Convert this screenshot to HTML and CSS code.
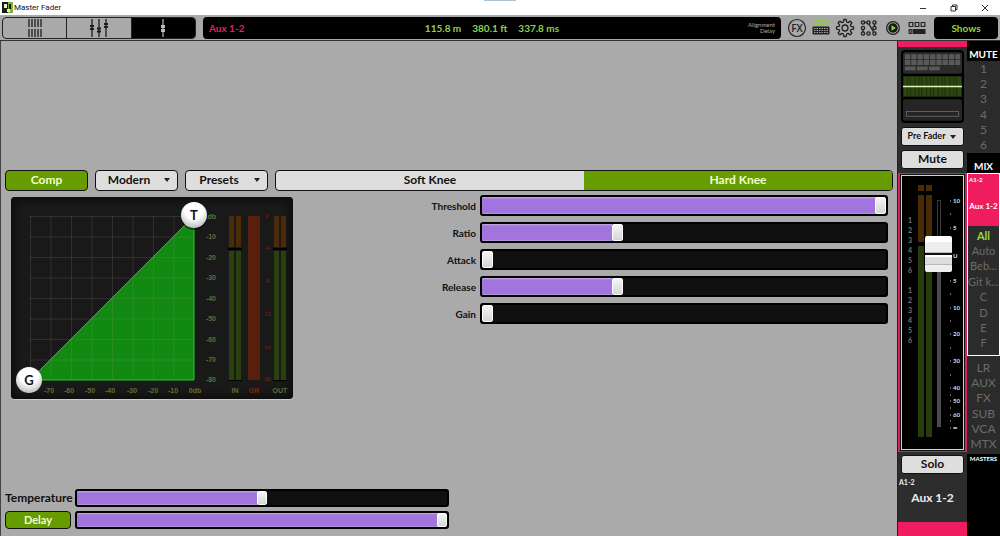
FILE: index.html
```html
<!DOCTYPE html>
<html lang="en">
<head>
    <meta charset="UTF-8">
    <meta name="viewport" content="width=device-width, initial-scale=1.0">
    <title>Master Fader</title>
    <link rel="stylesheet" href="styles.css">
</head>
<body>
    <header class="titlebar">
        <svg class="app-icon" width="11" height="11" viewBox="0 0 11 11">
            <rect width="11" height="11" fill="#7fb239"/>
            <path d="M0 0h6v11H0z" fill="#12210c"/>
            <path d="M2 2h3v4H2zM5 7h3v3H5z" fill="#e8f0dc"/>
            <path d="M7 2h2v5H7z" fill="#12210c"/>
        </svg>
        <span class="app-name">Master Fader</span>
        <div class="window-buttons">
            <button aria-label="Minimize"><svg width="8" height="8" viewBox="0 0 8 8"><path d="M1 4.500h6"/></svg></button>
            <button aria-label="Restore"><svg width="8" height="8" viewBox="0 0 8 8"><path d="M1 2.500h4.500V7H1zM2.500 2.500V1H7v4.500H5.500"/></svg></button>
            <button aria-label="Close"><svg width="8" height="8" viewBox="0 0 8 8"><path d="M1 1l6 6M7 1L1 7"/></svg></button>
        </div>
    </header>

    <nav class="toolbar">
        <div class="views">
            <button aria-label="Overview">
                <svg width="16" height="18" viewBox="0 0 16 18">
                    <path d="M2 0v8M5 0v8M8 0v8M11 0v8M14 0v8M2 10v8M5 10v8M8 10v8M11 10v8M14 10v8" stroke="#1c1c1c" stroke-width="1.300"/>
                </svg>
            </button>
            <button aria-label="Mixer">
                <svg width="22" height="18" viewBox="0 0 22 18">
                    <path d="M4 0v18M11 0v18M18 0v18" stroke="#1c1c1c" stroke-width="1.300"/>
                    <path d="M2 6h4v2H2zM2 9h4v2H2zM9 8.500h4v2H9zM9 11.500h4v2H9zM16 4h4v2h-4zM16 7h4v2h-4z" fill="#1c1c1c"/>
                </svg>
            </button>
            <button class="active" aria-label="Channel">
                <svg width="10" height="18" viewBox="0 0 10 18">
                    <path d="M5 0v18" stroke="#bbb" stroke-width="1.200"/>
                    <path d="M3 6h4v3H3zM3 10h4v3H3z" fill="#bbb"/>
                </svg>
            </button>
        </div>
        <div class="display">
            <span class="display-channel">Aux 1-2</span>
            <div class="readouts">
                <span>115.8 m</span>
                <span>380.1 ft</span>
                <span>337.8 ms</span>
            </div>
            <span class="display-label">Alignment<br>Delay</span>
        </div>
        <div class="tools">
            <button aria-label="Effects">
                <svg width="20" height="20" viewBox="0 0 20 20">
                    <circle cx="10" cy="10" r="8.500" fill="none" stroke="#222" stroke-width="1.200"/>
                    <text x="10" y="14" text-anchor="middle" class="fx-text">FX</text>
                </svg>
            </button>
            <button aria-label="Mixer connection">
                <svg width="20" height="20" viewBox="0 0 20 20">
                    <path d="M2.500 5.500Q10 -2 17.500 5.500" fill="none" stroke="#86d42a" stroke-width="1.600"/>
                    <path d="M5.500 7.500Q10 3 14.500 7.500" fill="none" stroke="#86d42a" stroke-width="1.600"/>
                    <rect x="1.500" y="8.500" width="17" height="8" rx="1" fill="#222"/>
                    <path d="M3 10.500h14M3 12.500h14M3 14.500h14" stroke="#a5a5a5" stroke-width="1" stroke-dasharray="1.500 1"/>
                </svg>
            </button>
            <button aria-label="Settings">
                <svg width="20" height="20" viewBox="0 0 20 20" fill="none" stroke="#222" stroke-width="1.300" stroke-linejoin="round">
                    <path d="M8.400 4L8.800 1.500h2.400L11.600 4L13.100 4.600L15.200 3.100L16.900 4.800L15.400 6.900L16 8.400L18.500 8.800v2.400L16 11.600L15.400 13.100L16.900 15.200L15.200 16.900L13.100 15.400L11.600 16L11.200 18.500H8.800L8.400 16L6.900 15.400L4.800 16.900L3.100 15.200L4.600 13.100L4 11.600L1.500 11.200V8.800L4 8.400L4.600 6.900L3.100 4.800L4.800 3.100L6.900 4.600z"/>
                    <circle cx="10" cy="10" r="3"/>
                </svg>
            </button>
            <button aria-label="Patching">
                <svg width="20" height="20" viewBox="0 0 20 20" fill="none" stroke="#222" stroke-width="1.400">
                    <path d="M4 4.500h5l6.500 11M4 10v5.500M15.500 4.500V10"/>
                    <g fill="#aaa">
                        <circle cx="4" cy="4.500" r="1.600"/><circle cx="9.500" cy="4.500" r="1.600"/><circle cx="15.500" cy="4.500" r="1.600"/>
                        <circle cx="4" cy="10" r="1.600"/><circle cx="15.500" cy="10" r="1.600"/>
                        <circle cx="4" cy="15.500" r="1.600"/><circle cx="9.500" cy="15.500" r="1.600"/><circle cx="15.500" cy="15.500" r="1.600"/>
                    </g>
                </svg>
            </button>
            <button aria-label="Playback">
                <svg width="20" height="20" viewBox="0 0 20 20">
                    <circle cx="10" cy="10" r="6.300" fill="#aaa" stroke="#222" stroke-width="1.300"/>
                    <circle cx="10" cy="10" r="4.700" fill="#161616"/>
                    <path d="M8.500 7.200l4.300 2.800l-4.300 2.800z" fill="#8be01e"/>
                </svg>
            </button>
            <button aria-label="View groups">
                <svg width="20" height="20" viewBox="0 0 20 20">
                    <path d="M2.200 4.500h3.600v4H2.200zM8.200 4.500h3.600v4H8.200zM14.200 4.500h3.600v4h-3.600zM2.200 11.500h2v4h-2z" fill="none" stroke="#222" stroke-width="1.200"/>
                    <path d="M5.500 11h13v5h-13z" fill="#222"/>
                </svg>
            </button>
        </div>
        <button class="shows">Shows</button>
    </nav>

    <main class="mixer">
        <section class="editor">
            <div class="options">
                <button class="btn on">Comp</button>
                <div class="picker"><select aria-label="Compressor model"><option>Modern</option></select></div>
                <div class="picker"><select aria-label="Presets"><option>Presets</option></select></div>
                <div class="knee">
                    <button>Soft Knee</button>
                    <button class="on">Hard Knee</button>
                </div>
            </div>

            <div class="dynamics">
                <svg class="graph" width="282" height="202" viewBox="0 0 282 202">
                    <defs>
                        <radialGradient id="knob" cx="0.500" cy="0.300" r="0.700">
                            <stop offset="0.500" stop-color="#fff"/>
                            <stop offset="1" stop-color="#bdbdbd"/>
                        </radialGradient>
                    </defs>
                    <path class="curve" d="M19 183L183 19V183z"/>
                    <path class="grid" d="M19.500 19v164M40 19v164M60.500 19v164M81 19v164M101.500 19v164M122 19v164M142.500 19v164M163 19v164M19 19.500h164M19 40h164M19 60.500h164M19 81h164M19 101.500h164M19 122h164M19 142.500h164M19 163h164"/>
                    <g class="scale scale-y">
                        <text x="205" y="22">db</text><text x="205" y="42">-10</text><text x="205" y="63">-20</text>
                        <text x="205" y="83">-30</text><text x="205" y="104">-40</text><text x="205" y="124">-50</text>
                        <text x="205" y="145">-60</text><text x="205" y="165">-70</text><text x="205" y="185">-80</text>
                    </g>
                    <g class="scale scale-x">
                        <text x="38" y="196">-70</text><text x="58" y="196">-60</text><text x="79" y="196">-50</text>
                        <text x="99" y="196">-40</text><text x="121" y="196">-30</text><text x="142" y="196">-20</text>
                        <text x="162" y="196">-10</text><text x="184" y="196">0db</text>
                        <text x="224" y="196">IN</text><text x="243" y="196" class="gr">GR</text><text x="269" y="196">OUT</text>
                    </g>
                    <path class="meter-high" d="M218 19h5v31h-5zM225 19h5v31h-5zM263 19h5v31h-5zM270 19h5v31h-5z"/>
                    <path class="meter-low" d="M218 54h5v129h-5zM225 54h5v129h-5zM263 54h5v129h-5zM270 54h5v129h-5z"/>
                    <path class="meter-gap" d="M217 51h14v2h-14zM262 51h14v2h-14zM217 183h14v1h-14zM262 183h14v1h-14z"/>
                    <rect class="meter-gr" x="237" y="19" width="12" height="164"/>
                    <g class="scale-gr">
                        <text x="256" y="21">0</text><text x="256" y="53">-4</text><text x="256" y="86">-8</text>
                        <text x="256" y="119">-12</text><text x="256" y="152">-16</text><text x="256" y="184">-20</text>
                    </g>
                    <circle cx="183" cy="20" r="13" fill="#000" opacity="0.500"/>
                    <circle cx="183" cy="18" r="13" fill="url(#knob)"/>
                    <circle cx="18" cy="183" r="13" fill="url(#knob)"/>
                    <text class="knob-text" x="183" y="23">T</text>
                    <text class="knob-text" x="18" y="188">G</text>
                </svg>

                <div class="sliders">
                    <label for="threshold">Threshold</label>
                    <input type="range" id="threshold" value="100" style="--value: 1">
                    <label for="ratio">Ratio</label>
                    <input type="range" id="ratio" value="33" style="--value: 0.33">
                    <label for="attack">Attack</label>
                    <input type="range" id="attack" value="0" style="--value: 0">
                    <label for="release">Release</label>
                    <input type="range" id="release" value="33" style="--value: 0.33">
                    <label for="gain">Gain</label>
                    <input type="range" id="gain" value="0" style="--value: 0">
                </div>
            </div>

            <div class="delay-panel">
                <label for="temperature">Temperature</label>
                <input type="range" id="temperature" value="50" style="--value: 0.5">
                <button class="btn on">Delay</button>
                <input type="range" aria-label="Delay" value="100" style="--value: 1">
            </div>
        </section>

        <aside class="strip">
            <div class="strip-color"></div>
            <div class="thumbs">
                <svg width="61" height="22" viewBox="0 0 61 22">
                    <rect width="61" height="22" rx="2" fill="#2b2b2b"/>
                    <path d="M2 4.500h57M2 10.500h57" stroke="#595959" stroke-width="5" stroke-dasharray="5.500 1"/>
                    <path d="M2 16.500h36" stroke="#595959" stroke-width="4" stroke-dasharray="11 1.500"/>
                </svg>
                <svg width="61" height="21" viewBox="0 0 61 21">
                    <rect width="61" height="21" fill="#2c4712"/>
                    <path d="M0 10.500h61" stroke="#1d300b" stroke-width="21" stroke-dasharray="1 3 1 2 1 4"/>
                    <path d="M0 10.500h61" stroke="#e4f3b4" stroke-width="1.500"/>
                </svg>
                <svg width="61" height="22" viewBox="0 0 61 22">
                    <rect width="61" height="22" rx="2" fill="#252525"/>
                    <rect x="3.500" y="12.500" width="54" height="5" fill="none" stroke="#626262"/>
                </svg>
            </div>
            <div class="picker small"><select aria-label="Send point"><option>Pre Fader</option></select></div>
            <button class="btn strip-btn">Mute</button>
            <div class="fader-frame">
                <div class="fader-box">
                    <svg class="fader-scale" height="271" viewBox="1 0 59 271">
                        <path d="M16 8h6v6h-6zM24 8h6v6h-6zM16 18h6v47h-6zM24 18h6v47h-6z" fill="#4a2b05"/>
                        <path d="M16 69h6v191h-6zM24 69h6v191h-6z" fill="#283d0d"/>
                        <rect x="35.500" y="23.500" width="3" height="225" fill="#000" stroke="#3a3a3a"/>
                        <rect x="35" y="90" width="4" height="160" fill="#4b4b4d"/>
                        <g class="group-numbers">
                            <text x="8" y="46">1</text><text x="8" y="56">2</text><text x="8" y="66">3</text>
                            <text x="8" y="76">4</text><text x="8" y="86">5</text><text x="8" y="96">6</text>
                            <text x="8" y="116">1</text><text x="8" y="126">2</text><text x="8" y="136">3</text>
                            <text x="8" y="146">4</text><text x="8" y="156">5</text><text x="8" y="166">6</text>
                        </g>
                        <path class="ticks" d="M48 24h1M48 37h1M48 51h1M48 79h1M48 104h1M48 117h1M48 131h1M48 144h1M48 157h1M48 171h1M48 184h1M48 198h1M48 211h1M48 218h1M48 224h1M48 231h1M48 238h1M48 244h1M48 251h1"/>
                        <g class="db-numbers">
                            <text x="51" y="26">10</text><text x="51" y="53">5</text><text x="51" y="81">U</text>
                            <text x="51" y="106">5</text><text x="51" y="133">10</text><text x="51" y="159">20</text>
                            <text x="51" y="186">30</text><text x="51" y="213">40</text><text x="51" y="226">50</text>
                            <text x="51" y="240">60</text><text x="51" y="253">∞</text>
                        </g>
                    </svg>
                    <input type="range" class="fader" aria-label="Aux 1-2 level" value="77">
                </div>
            </div>
            <button class="btn strip-btn">Solo</button>
            <div class="strip-name">
                <span class="strip-id">A1-2</span>
                <span class="strip-title">Aux 1-2</span>
            </div>
            <div class="strip-foot"></div>
        </aside>

        <aside class="banks">
            <h2>MUTE</h2>
            <div class="bank">
                <button>1</button><button>2</button><button>3</button>
                <button>4</button><button>5</button><button>6</button>
            </div>
            <h2>MIX</h2>
            <div class="mix">
                <button class="mix-current"><small>A1-2</small><span>Aux 1-2</span></button>
                <div class="bank tall">
                    <button class="selected">All</button><button>Auto</button><button>Beb...</button><button>Git k...</button>
                    <button>C</button><button>D</button><button>E</button><button>F</button>
                </div>
            </div>
            <div class="bank masters">
                <button>LR</button><button>AUX</button><button>FX</button>
                <button>SUB</button><button>VCA</button><button>MTX</button>
            </div>
            <h3>MASTERS</h3>
        </aside>
    </main>
</body>
</html>
```
FILE: styles.css
```css
* {
    box-sizing: border-box;
}
body {
    margin: 0;
    min-height: 100vh;
    display: flex;
    flex-direction: column;
    background-color: #aaa;
    color: #111;
    font-family: Lato, "Open Sans", sans-serif;
    font-size: 12px;
    font-weight: 700;
}
button,
select,
input {
    font: inherit;
    color: inherit;
    margin: 0;
    padding: 0;
}
button {
    border: none;
    background: none;
    cursor: pointer;
}
svg {
    display: block;
}

/* Window title bar */
.titlebar {
    display: flex;
    align-items: center;
    height: 15px;
    padding-left: 2px;
    gap: 1px;
    background: #fff linear-gradient(#a9c4d8, #a9c4d8) 50% 0 / 32px 1px no-repeat;
    font-family: Roboto, sans-serif;
    font-size: 8px;
    font-weight: 400;
}
.window-buttons {
    display: flex;
    margin-left: auto;
}
.window-buttons button {
    display: flex;
    justify-content: center;
    width: 31px;
}
.window-buttons path {
    fill: none;
    stroke: #333;
    stroke-width: 1;
}

/* Toolbar */
.toolbar {
    display: flex;
    align-items: center;
    height: 26px;
    padding: 0 2px;
    background-color: #a9a9a9;
    border-bottom: 1px solid #333;
}
.views {
    display: flex;
    width: 194px;
    height: 22px;
    border: 1px solid #222;
    border-radius: 4px;
    overflow: hidden;
}
.views button {
    flex: 1;
    display: flex;
    justify-content: center;
    align-items: center;
    border-right: 1px solid #222;
}
.views button.active {
    background-color: #000;
    border: none;
}
.display {
    flex: 1;
    display: grid;
    grid-template-columns: 1fr auto 1fr;
    align-items: center;
    height: 22px;
    margin-left: 7px;
    padding: 0 6px;
    border-radius: 4px;
    background-color: #000;
    font-size: 10px;
}
.display-channel {
    color: #e0205a;
}
.readouts {
    display: flex;
    gap: 11px;
    color: #8fd052;
}
.display-label {
    color: #aaa;
    font-size: 6px;
    font-weight: 400;
    line-height: 6px;
    text-align: right;
}
.tools {
    display: flex;
    gap: 4px;
    margin: 0 7px 0 6px;
}
.fx-text {
    font-family: "Open Sans", sans-serif;
    font-size: 10px;
    font-weight: 600;
    fill: #222;
}
.shows {
    width: 64px;
    height: 22px;
    border-radius: 4px;
    background-color: #000;
    color: #8fd93a;
    font-size: 10px;
}

/* Main area */
.mixer {
    flex: 1;
    display: flex;
}
.editor {
    flex: 1;
    display: flex;
    flex-direction: column;
    padding: 129px 4px 7px;
    border-left: 1px solid #444;
}
.options {
    display: flex;
    gap: 7px;
}
.btn,
.picker,
.knee {
    height: 21px;
    border: 1px solid #111;
    border-radius: 4px;
    background-color: #dedede;
    overflow: hidden;
}
.btn,
.knee button,
.picker select {
    padding-bottom: 2px;
}
.options .btn,
.options .picker {
    width: 83px;
}
.btn.on,
.knee .on {
    background-color: #669c00;
    color: #f0ffd0;
}
.picker {
    position: relative;
}
.picker select {
    appearance: none;
    width: 100%;
    height: 100%;
    padding-right: 15px;
    border: none;
    background: none;
    text-align: center;
    text-align-last: center;
}
.picker::after {
    content: '';
    position: absolute;
    top: 7px;
    right: 7px;
    border: 3px solid transparent;
    border-top: 4px solid #222;
    border-bottom: none;
    pointer-events: none;
}
.knee {
    flex: 1;
    display: flex;
}
.knee button {
    flex: 1;
}
.dynamics {
    display: flex;
    padding: 4px 5px 0 6px;
}

/* Compressor graph */
.graph {
    flex: none;
    margin-top: 2px;
    border-radius: 4px;
    background-color: #191919;
    box-shadow: inset 0 0 6px 3px #0c0c0c, 0 1px 0 #ccc;
}
.curve {
    fill: #128a12;
    stroke: #28c435;
    stroke-width: 1;
}
.grid {
    fill: none;
    stroke: #8a8a70;
    stroke-opacity: 0.2;
}
.scale {
    font-family: "Liberation Sans", sans-serif;
    font-size: 7px;
    fill: #5d6f35;
}
.scale-y {
    text-anchor: end;
}
.scale-x,
.scale-gr,
.knob-text {
    text-anchor: middle;
}
.gr {
    fill: #7a2712;
}
.scale-gr {
    font-size: 5px;
    fill: #6e2411;
}
.meter-high {
    fill: #4c2c08;
}
.meter-low {
    fill: #2a410f;
}
.meter-gap {
    fill: #000;
}
.meter-gr {
    fill: #5a1e0d;
}
.knob-text {
    font-size: 13px;
    fill: #111;
}

/* Sliders */
.sliders {
    flex: 1;
    display: grid;
    grid-template-columns: 183px 1fr;
    grid-auto-rows: 21px;
    column-gap: 4px;
    row-gap: 6px;
    align-items: center;
    font-size: 10px;
}
.sliders label {
    text-align: right;
}
.delay-panel label {
    padding-bottom: 2px;
}
.sliders input,
.delay-panel input {
    appearance: none;
    width: 100%;
    min-width: 0;
    height: 100%;
    border: 2px solid #000;
    border-radius: 3px;
    background: #101010 linear-gradient(#c3aee0, #a175dd 2px calc(100% - 1px), #c3aee0) 0 0 / calc((100% - 11px) * var(--value) + 3px * var(--value)) 100% no-repeat;
}
.sliders input::-webkit-slider-thumb,
.delay-panel input::-webkit-slider-thumb {
    appearance: none;
    width: 11px;
    height: 17px;
    border: 1px solid #fff;
    border-radius: 2px;
    background: linear-gradient(#f4f4f4, #d4d8d4);
}
.delay-panel {
    display: grid;
    grid-template-columns: 66px 1fr;
    grid-auto-rows: 18px;
    gap: 4px;
    align-items: center;
    width: 50%;
    margin-top: auto;
}
.delay-panel .btn {
    height: 18px;
    font-size: 11px;
}
.delay-panel input::-webkit-slider-thumb {
    width: 10px;
    height: 14px;
}

/* Channel strip */
.strip {
    display: flex;
    flex-direction: column;
    width: 70px;
    border-left: 1px solid #222;
    background-color: #2d2d2d;
}
.strip-color {
    height: 6px;
    background-color: #f01c60;
}
.thumbs {
    display: flex;
    flex-direction: column;
    gap: 2px;
    margin: 3px 3px 4px;
    padding: 2px;
    border-radius: 4px;
    background-color: #000;
}
.thumbs svg {
    width: 100%;
}
.picker.small,
.strip-btn {
    height: 19px;
    margin: 0 3px;
    border-radius: 3px;
}
.picker.small {
    margin-bottom: 4px;
    font-size: 9px;
}
.picker.small select {
    padding-right: 12px;
}
.fader-frame {
    margin: 4px 0 3px;
    padding: 2px 3px;
    background-color: #d92358;
}
.fader-box {
    position: relative;
    padding: 1px;
    border: 1px solid #e6e05a;
    outline: 1px solid #111;
    background-color: #000;
}
.fader-scale {
    width: 100%;
}
.group-numbers {
    font-size: 7px;
    fill: #777;
    text-anchor: middle;
}
.ticks {
    stroke: #ccc;
}
.db-numbers {
    font-size: 6px;
    fill: #ddd;
}
/* The cap slides over the meters */
.fader {
    position: absolute;
    top: 8px;
    left: 23px;
    appearance: none;
    writing-mode: vertical-lr;
    direction: rtl;
    width: 27px;
    height: 260px;
    background: none;
}
.fader::-webkit-slider-thumb {
    appearance: none;
    width: 27px;
    height: 36px;
    border-radius: 2px;
    background: linear-gradient(#fff 0 6px, #eee 6px 16px, #bbb 16px 17px, #111 17px 19px, #fff 19px 21px, #ddd 21px 28px, #b8b8b8 28px 29px, #eee 29px);
}
.strip-name {
    display: flex;
    flex-direction: column;
    gap: 4px;
    height: 48px;
    padding-top: 3px;
    color: #eee;
}
.strip-id {
    padding-left: 1px;
    font-size: 7px;
    line-height: 10px;
}
.strip-title {
    text-align: center;
    line-height: 14px;
}
.strip-foot {
    flex: 1;
    background-color: #f01c60;
}

/* Bank buttons */
.banks {
    display: flex;
    flex-direction: column;
    width: 33px;
    background-color: #000;
    color: #fff;
}
.banks h2 {
    margin: 0;
    padding-top: 3px;
    height: 20px;
    font-size: 10px;
    line-height: 20px;
    text-align: center;
}
.banks h3 {
    margin: 0;
    font-size: 6px;
    line-height: 10px;
    text-align: center;
}
.bank {
    display: grid;
    grid-auto-rows: 1fr;
    height: 92px;
    background-color: #2b2b2b;
    color: #6b6b6b;
    font-size: 12px;
    font-weight: 400;
    line-height: 14px;
    white-space: nowrap;
}
.bank.tall {
    height: 129px;
    padding: 2px 0 4px;
    font-size: 11px;
}
.bank.masters {
    height: 98px;
    padding: 4px 0 2px;
}
.bank .selected {
    color: #94dc3c;
    font-weight: 700;
}
.mix {
    border: 1px solid #fff;
}
.mix-current {
    display: flex;
    flex-direction: column;
    align-items: flex-start;
    gap: 16px;
    width: 100%;
    height: 52px;
    padding: 2px 1px 0;
    background-color: #f01c60;
    color: #fff;
    font-size: 8px;
}
.mix-current small {
    font-size: 6px;
    line-height: 8px;
}
.mix-current span {
    align-self: center;
    line-height: 12px;
    white-space: nowrap;
}
```
